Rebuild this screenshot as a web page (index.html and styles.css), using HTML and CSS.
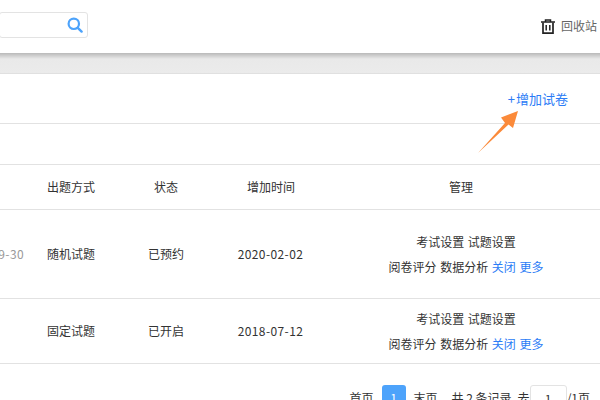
FILE: index.html
```html
<!DOCTYPE html>
<html lang="zh-CN">
<head>
<meta charset="utf-8">
<title>试卷管理</title>
<link rel="stylesheet" href="styles.css">
</head>
<body>
<div class="page">
  <header class="topbar">
    <div class="search">
      <svg class="search-icon" width="16" height="16" viewBox="0 0 16 16" aria-hidden="true">
        <circle cx="6.8" cy="6.8" r="5.2" fill="none" stroke="#4da3fb" stroke-width="2.2"/>
        <path d="M10.8 10.8 14.6 14.6" stroke="#4da3fb" stroke-width="2.4" stroke-linecap="round"/>
      </svg>
    </div>
    <div class="recycle">
      <svg width="14" height="15" viewBox="0 0 14 15" aria-hidden="true">
        <path d="M0 3h14M4.500 3V1h5v2" fill="none" stroke="#222" stroke-width="1.500"/>
        <path d="M2 3.500v10.700h10V3.500" fill="none" stroke="#222" stroke-width="1.700"/>
        <path d="M5.200 6v5.500M8.800 6v5.500" stroke="#222" stroke-width="1.500"/>
      </svg>
      <span>回收站</span>
    </div>
  </header>
  <div class="band"></div>
  <div class="toolbar"><a class="add-link"><span class="plus">+</span>增加试卷</a></div>
  <div class="filter-row"></div>
  <div class="row head">
    <div class="cell"></div>
    <div class="cell">出题方式</div>
    <div class="cell">状态</div>
    <div class="cell">增加时间</div>
    <div class="cell manage-head">管理</div>
  </div>
  <div class="row first">
    <div class="cell date-cut">2020-09-30</div>
    <div class="cell">随机试题</div>
    <div class="cell">已预约</div>
    <div class="cell date">2020-02-02</div>
    <div class="cell manage">
      <div class="line">考试设置 试题设置</div>
      <div class="line">阅卷评分 数据分析 <a>关闭</a> <a>更多</a></div>
    </div>
  </div>
  <div class="row second">
    <div class="cell"></div>
    <div class="cell">固定试题</div>
    <div class="cell">已开启</div>
    <div class="cell date">2018-07-12</div>
    <div class="cell manage">
      <div class="line">考试设置 试题设置</div>
      <div class="line">阅卷评分 数据分析 <a>关闭</a> <a>更多</a></div>
    </div>
  </div>
  <nav class="pager">
    <span>首页</span>
    <span class="current">1</span>
    <span>末页</span>
    <span class="total">共 2 条记录</span>
    <span class="go">去<span class="page-input">1</span>/1页</span>
  </nav>
  <svg class="arrow" width="44" height="46" viewBox="0 0 44 46" aria-hidden="true">
    <polygon points="1,43 28,13 24,7.500 41,1 36,18 31.500,14.500" fill="#fb8a3a"/>
  </svg>
</div>
</body>
</html>
```
FILE: styles.css
```css
* { box-sizing: border-box; }
html, body { margin: 0; height: 100%; }
body {
  background: #fff;
  color: #333;
  font: 12px/20px "Noto Sans CJK SC", "Liberation Sans", sans-serif;
  overflow: hidden;
}
.page { position: relative; width: 600px; height: 400px; overflow: hidden; }
a { color: #2b7cf6; text-decoration: none; }

.topbar {
  height: 53px;
  padding-top: 12px;
  display: flex;
  justify-content: space-between;
  align-items: flex-start;
}
.search {
  width: 89px;
  height: 26px;
  margin-left: -1px;
  border: 1px solid #e3e3e3;
  border-radius: 3px;
  display: flex;
  justify-content: flex-end;
  align-items: center;
  padding-right: 4px;
}
.search-icon { display: block; }
.recycle {
  display: flex;
  align-items: center;
  gap: 6px;
  margin-right: 3px;
  margin-top: 4px;
  color: #666;
}
.band {
  height: 21px;
  background: linear-gradient(#b9b9b9, #e9e9e9 6px, #ebebeb);
  border-bottom: 1px solid #e0e0e0;
}
.toolbar {
  height: 50px;
  border-bottom: 1px solid #e2e2e2;
  display: flex;
  justify-content: flex-end;
  align-items: center;
  padding-right: 32px;
}
.add-link { font-size: 13px; }
.plus { margin-right: 1px; }
.filter-row { height: 41px; border-bottom: 1px solid #e2e2e2; }

.row {
  display: grid;
  grid-template-columns: 24px 94px 96px 114px 272px;
  border-bottom: 1px solid #e2e2e2;
  align-items: center;
  text-align: center;
}
.head { height: 45px; padding-bottom: 1px; }
.first { height: 89px; }
.second { height: 65px; }
.cell { white-space: nowrap; }
.date-cut { display: flex; justify-content: flex-end; color: #999; letter-spacing: .4px; }
.date { letter-spacing: .4px; margin-left: -1px; }
.manage { padding-left: 4px; word-spacing: 1px; }
.manage-head { padding-right: 6px; }
.line + .line { margin-top: 5px; }

.pager {
  display: flex;
  justify-content: flex-end;
  padding: 21px 10px 0 0;
  gap: 8px;
  line-height: 26px;
}
.current {
  width: 24px;
  height: 26px;
  border-radius: 3px;
  background: #4da3fb;
  color: #fff;
  text-align: center;
}
.total { margin: 0 -2px 0 6px; }
.go { display: flex; }
.page-input {
  width: 37px;
  height: 26px;
  border: 1px solid #e3e3e3;
  border-radius: 3px;
  text-align: center;
}
.arrow { position: absolute; left: 477px; top: 110px; }
```
